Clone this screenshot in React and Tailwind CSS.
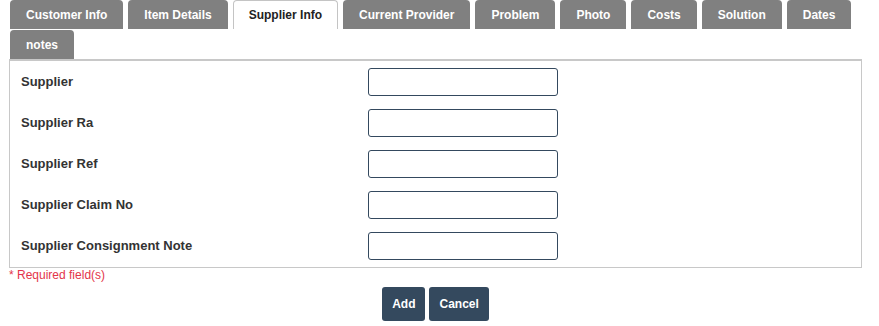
const tabs = [
    'Customer Info',
    'Item Details',
    'Supplier Info',
    'Current Provider',
    'Problem',
    'Photo',
    'Costs',
    'Solution',
    'Dates',
    'notes',
];

const fields = [
    'Supplier',
    'Supplier Ra',
    'Supplier Ref',
    'Supplier Claim No',
    'Supplier Consignment Note',
];

const App = () => {
    const active = 'Supplier Info';

    return (
        <div className="w-[879px] h-[326px] bg-white font-['Liberation_Sans',Arial,sans-serif] overflow-hidden">
            {/* Tab strip */}
            <div className="flex flex-wrap gap-x-[5px] gap-y-[1px] pl-[10px] w-[862px]">
                {tabs.map((tab) =>
                    tab === active ? (
                        <div
                            key={tab}
                            className="h-[29px] px-[15px] flex items-center rounded-t-[4px] border border-b-0 border-[#c4c4c4] bg-white text-[12px] font-bold text-[#222]"
                        >
                            {tab}
                        </div>
                    ) : (
                        <div
                            key={tab}
                            className="h-[29px] px-4 flex items-center rounded-t-[4px] bg-[#808080] text-[12px] font-bold text-white"
                        >
                            {tab}
                        </div>
                    )
                )}
            </div>

            {/* Form panel */}
            <div className="ml-[9px] w-[853px] border border-t-2 border-[#c8c8c8] pt-[7px] pb-[7px] flex flex-col gap-[13px]">
                {fields.map((label) => (
                    <div key={label} className="flex items-center">
                        <label className="w-[358px] pl-[11px] text-[13px] font-bold text-[#333]">{label}</label>
                        <input
                            type="text"
                            className="w-[190px] h-[28px] rounded-[3px] border border-[#34495e] bg-white px-2 text-[13px] outline-none"
                        />
                    </div>
                ))}
            </div>

            <div className="ml-[9px] text-[12px] leading-[14px] text-[#e3344a]">* Required field(s)</div>

            <div className="w-[871px] flex justify-center gap-[4px] mt-[5px]">
                <button className="h-[34px] px-[10px] rounded-[3px] bg-[#34495e] text-white text-[12px] font-bold">
                    Add
                </button>
                <button className="h-[34px] px-[10px] rounded-[3px] bg-[#34495e] text-white text-[12px] font-bold">
                    Cancel
                </button>
            </div>
        </div>
    );
};

export default App;
